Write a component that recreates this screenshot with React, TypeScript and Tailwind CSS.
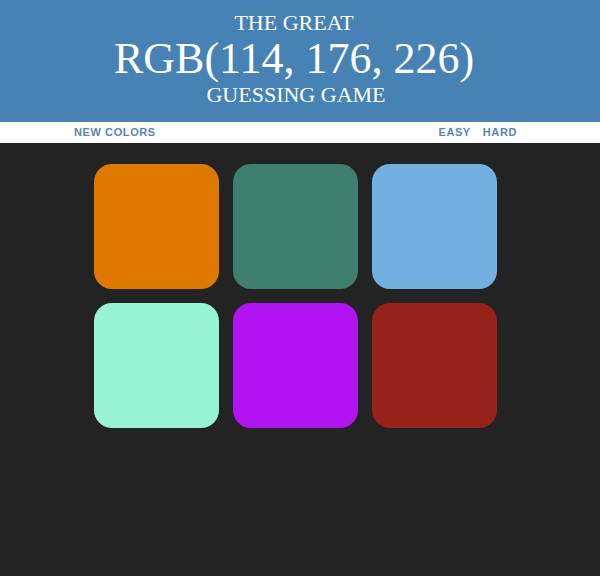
import React, { useState } from 'react';

const colors = [
  'rgb(224, 121, 0)',
  'rgb(63, 127, 109)',
  'rgb(114, 176, 226)',
  'rgb(151, 245, 214)',
  'rgb(176, 20, 242)',
  'rgb(151, 34, 26)',
];

export default function App() {
  const [mode, setMode] = useState<'easy' | 'hard'>('hard');

  return (
    <div className="min-h-[576px] bg-[#232323] font-['Liberation_Sans',Arial,sans-serif]">
      {/* Header */}
      <header className="bg-[#4682b4] pt-[10px] pb-[14px] pr-[12px] text-center text-white font-['Liberation_Serif','Times_New_Roman',serif] font-normal uppercase">
        <div className="text-[22px] leading-[26px]">The Great</div>
        <div className="text-[44px] leading-[46px]">RGB(114, 176, 226)</div>
        <div className="text-[22px] leading-[26px] pl-[4px]">Guessing Game</div>
      </header>

      {/* Nav bar */}
      <nav className="bg-white h-[21px] pr-[9px]">
        <div className="w-[443px] mx-auto flex items-center justify-between text-[11px] leading-[21px] font-bold uppercase tracking-[0.6px] text-[#5a86b0]">
          <button className="uppercase">New Colors</button>
          <div className="flex gap-[12px]">
            <button className="uppercase" onClick={() => setMode('easy')}>Easy</button>
            <button className="uppercase" onClick={() => setMode('hard')}>Hard</button>
          </div>
        </div>
      </nav>

      {/* Squares */}
      <div className="pt-[21px] pr-[9px]">
        <div className="w-[403px] mx-auto grid grid-cols-3 gap-[14px]">
          {(mode === 'easy' ? colors.slice(0, 3) : colors).map((c, i) => (
            <div
              key={i}
              className="w-[125px] h-[125px] rounded-[18px]"
              style={{ backgroundColor: c }}
            />
          ))}
        </div>
      </div>
    </div>
  );
}
